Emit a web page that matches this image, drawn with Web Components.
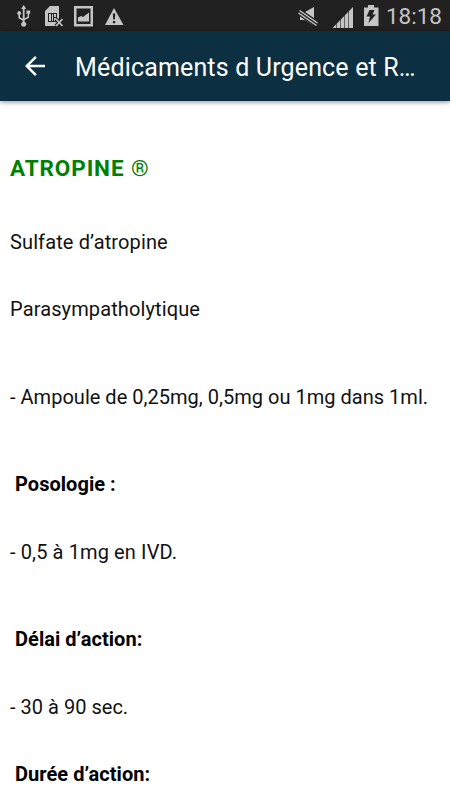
<!DOCTYPE html>
<html lang="fr">
<head>
<meta charset="utf-8">
<title>Médicaments d Urgence</title>
<style>
  body {
    background: #ffffff;
    font-family: Roboto, sans-serif;
    margin: 0;
    overflow: hidden;
  }
</style>
</head>
<body>
<med-app></med-app>

<script>
class MedStatusBar extends HTMLElement {
  constructor() {
    super();

    const template = document.createElement( 'template' );
    template.innerHTML = /* template */ `
      <style>
        :host {
          background: #212121;
          box-sizing: border-box;
          color: #c4c4c4;
          display: flex;
          height: 31px;
          justify-content: space-between;
          padding: 0 8px 0 16px;
        }

        div {
          display: flex;
        }

        svg {
          display: block;
          fill: currentColor;
          height: 31px;
        }

        p {
          font-size: 22.5px;
          font-weight: 400;
          line-height: 32px;
          margin: 0 0 0 6px;
        }
      </style>
      <div>
        <svg width="16" viewBox="16 0 16 31">
          <path d="M23.7 5l2.6 4h-1.7v9.2l3-1.5v-3h-1.2v-3.3h3.8v3.3h-1.1v4l-4.500 2.4v1.6a2.6 2.6 0 1 1-1.8 0v-1l-4.4-2.500v-3.4a1.9 1.9 0 1 1 1.600 0v2.4l2.8 1.500V9h-1.700z"/>
        </svg>
        <svg width="36" viewBox="32 0 36 31">
          <path fill-rule="evenodd" d="M50 6h9v20H45V11zM48 13v9h9v-9zM49 14h2v7h-2zm3 0h1v7h-1zm2 0h2v3h-2zm0 4h2v3h-2z"/>
          <path d="M56 19l6.500 7M62.500 19L56 26" fill="none" stroke="#212121" stroke-width="4"/>
          <path d="M56 19l6.500 7M62.500 19L56 26" fill="none" stroke="currentColor" stroke-width="1.700"/>
        </svg>
        <svg width="32" viewBox="68 0 32 31">
          <path fill-rule="evenodd" d="M74 6h19v20.500H74zM76.500 8.500v15.500h14V8.500z"/>
          <path d="M78 21.500v-4l3-1.500 2 1 6-4.500v9z"/>
        </svg>
        <svg width="24" viewBox="100 0 24 31">
          <path fill-rule="evenodd" d="M114 8l9.500 17H105zM112.800 13.500l.4 6h1.700l.4-6zM112.900 21v2.300h2.300V21z"/>
        </svg>
      </div>
      <div>
        <svg width="28" viewBox="298 0 28 31">
          <path d="M300 12h5l9-5v17.500h-2l-7-4.500h-5z"/>
          <path d="M297 10.500l22 15" stroke="#212121" stroke-width="6.400"/>
          <path d="M299.500 10.500l18 12.500M298.500 13l18 12.500" stroke="currentColor" stroke-width="1.500"/>
        </svg>
        <svg width="32" viewBox="326 0 32 31">
          <path d="M332.500 28L353 7v21z"/>
          <path d="M336.500 20v8M340.500 16v12M344.500 12v16M348.500 8v20" stroke="#212121" stroke-width="0.6"/>
        </svg>
        <svg width="22" viewBox="358 0 22 31">
          <path d="M368 5h6v2.500h4.500V26H364V7.500h4z"/>
          <path d="M369.500 10h5l-2 4.500h3.500L368.500 23l1.500-6.500h-3.500z" fill="#212121"/>
        </svg>
        <p>18:18</p>
      </div>
    `;

    const shadowRoot = this.attachShadow( {mode: 'open'} );
    shadowRoot.appendChild( template.content.cloneNode( true ) );
  }
}

window.customElements.define( 'med-status-bar', MedStatusBar );

class MedToolbar extends HTMLElement {
  constructor() {
    super();

    const template = document.createElement( 'template' );
    template.innerHTML = /* template */ `
      <style>
        :host {
          align-items: center;
          background: #0c3042;
          box-shadow: 0 1px 5px rgba( 0, 0, 0, 0.45 );
          box-sizing: border-box;
          color: #ffffff;
          display: flex;
          height: 70px;
          padding: 0 30px 0 20px;
          position: relative;
        }

        button {
          background: none;
          border: none;
          color: inherit;
          flex: none;
          height: 30px;
          margin: 0 25px 0 0;
          padding: 0;
          width: 30px;
        }

        svg {
          display: block;
          fill: currentColor;
        }

        h1 {
          font-size: 25px;
          font-weight: 400;
          letter-spacing: 0.16px;
          line-height: 32px;
          margin: 4px 0 0 0;
          white-space: nowrap;
        }
      </style>
      <button part="button" aria-label="Retour">
        <svg width="30" height="30" viewBox="0 0 24 24">
          <path d="M20 11H7.830l5.590-5.590L12 4l-8 8 8 8 1.410-1.410L7.830 13H20v-2z"/>
        </svg>
      </button>
      <h1><slot></slot></h1>
    `;

    const shadowRoot = this.attachShadow( {mode: 'open'} );
    shadowRoot.appendChild( template.content.cloneNode( true ) );
  }
}

window.customElements.define( 'med-toolbar', MedToolbar );

// One line of the drug sheet
// Plain text, or a heading with the strong attribute
class MedLine extends HTMLElement {
  constructor() {
    super();

    const template = document.createElement( 'template' );
    template.innerHTML = /* template */ `
      <style>
        :host {
          color: #111111;
          display: block;
          font-size: 20px;
          letter-spacing: var( --line-spacing, 0.12px );
          line-height: 24px;
          margin-bottom: 43.5px;
          white-space: nowrap;
        }

        :host( [spaced] ) {
          margin-bottom: 63.5px;
        }

        :host( [strong] ) {
          color: #000000;
          font-weight: 700;
          letter-spacing: 0.04px;
          padding-left: 5px;
        }

        :host( [name] ) {
          color: #008000;
          font-size: 22.5px;
          font-weight: 700;
          letter-spacing: 0.9px;
          margin-bottom: 49.5px;
        }

        ::slotted( span ) {
          font-weight: 400;
        }
      </style>
      <slot></slot>
    `;

    const shadowRoot = this.attachShadow( {mode: 'open'} );
    shadowRoot.appendChild( template.content.cloneNode( true ) );
  }
}

window.customElements.define( 'med-line', MedLine );

class MedApp extends HTMLElement {
  constructor() {
    super();

    const template = document.createElement( 'template' );
    template.innerHTML = /* template */ `
      <style>
        :host {
          display: block;
          height: 800px;
          overflow: hidden;
        }

        main {
          padding: 55px 10px 0 10px;
        }

        .tight {
          --line-spacing: 0.02px;
        }
      </style>
      <med-status-bar></med-status-bar>
      <med-toolbar>Médicaments d Urgence et R…</med-toolbar>
      <main>
        <med-line name>ATROPINE <span>®</span></med-line>
        <med-line>Sulfate d’atropine</med-line>
        <med-line spaced>Parasympatholytique</med-line>
        <med-line class="tight" spaced>- Ampoule de 0,25mg, 0,5mg ou 1mg dans 1ml.</med-line>
        <med-line strong>Posologie :</med-line>
        <med-line spaced>- 0,5 à 1mg en IVD.</med-line>
        <med-line strong>Délai d’action:</med-line>
        <med-line class="tight">- 30 à 90 sec.</med-line>
        <med-line strong>Durée d’action:</med-line>
      </main>
    `;

    const shadowRoot = this.attachShadow( {mode: 'open'} );
    shadowRoot.appendChild( template.content.cloneNode( true ) );
  }
}

window.customElements.define( 'med-app', MedApp );
</script>
</body>
</html>
